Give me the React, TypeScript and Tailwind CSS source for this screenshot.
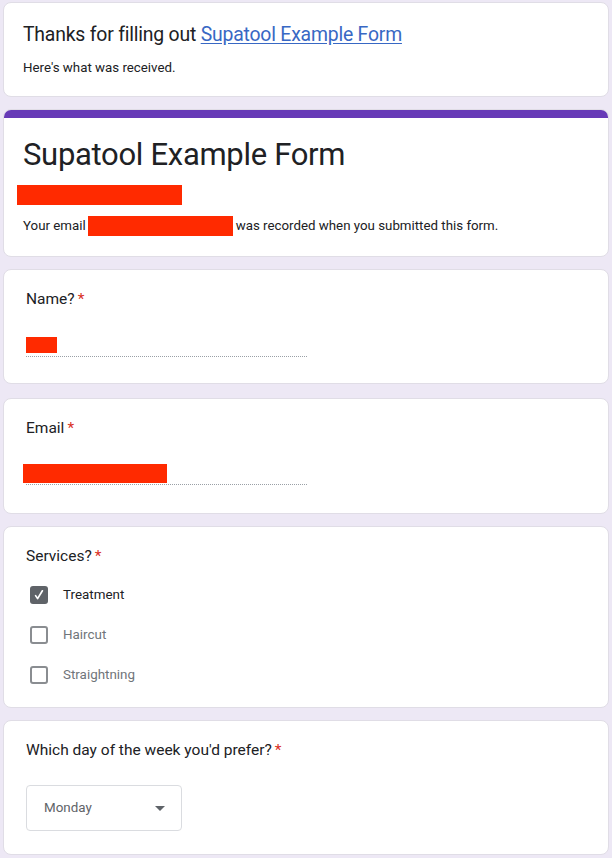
import React from "react";

const Star = () => <span className="text-[#d93025] ml-[3px]">*</span>;

function Card({ children, className = "" }: { children: React.ReactNode; className?: string }) {
  return (
    <div className={`bg-white rounded-[8px] border border-[#e0dde6] ${className}`}>{children}</div>
  );
}

function Check({ checked, label }: { checked?: boolean; label: string }) {
  return (
    <div className="h-10 flex items-center">
      <div className="w-[37px] flex pl-[4px]">
        {checked ? (
          <div className="w-[18px] h-[18px] rounded-[3px] bg-[#5f6368] flex items-center justify-center">
            <svg width="12" height="12" viewBox="0 0 12 12">
              <path d="M2.6 6.6 L4.6 9.6 L9.4 1.8" fill="none" stroke="white" strokeWidth="1.7" strokeLinecap="round" strokeLinejoin="round" />
            </svg>
          </div>
        ) : (
          <div className="w-[18px] h-[18px] rounded-[3px] border-2 border-[#8a8d91]" />
        )}
      </div>
      <span className={`text-[13.4px] ${checked ? "text-[#202124]" : "text-[#70757a]"}`}>{label}</span>
    </div>
  );
}

export default function App() {
  return (
    <div
      className="w-[612px] h-[858px] bg-[#ede8f5] px-[3px] pt-[2px] flex flex-col gap-[12px] overflow-hidden"
      style={{ fontFamily: "Roboto, 'Liberation Sans', sans-serif" }}
    >
      {/* Confirmation card */}
      <Card className="h-[95px] px-[19px] pt-[20px] shrink-0">
        <div className="text-[19.4px] leading-[24px] text-[#202124] tracking-[-0.2px]">
          Thanks for filling out{" "}
          <a className="text-[#3868c4] underline underline-offset-2">Supatool Example Form</a>
        </div>
        <div className="mt-[12px] text-[13.3px] leading-[18px] text-[#202124]">Here's what was received.</div>
      </Card>

      {/* Title card */}
      <div className="bg-white rounded-[8px] border border-[#e0dde6] overflow-hidden h-[148px] shrink-0">
        <div className="h-[8px] bg-[#673ab7]" />
        <div className="px-[19px] pt-[19px]">
          <div className="text-[31px] leading-[36px] text-[#202124] tracking-[-0.3px]">Supatool Example Form</div>
          <div className="mt-[12px] -ml-[6px] w-[165px] h-[20px] bg-[#ff2a00]" />
          <div className="mt-[11px] flex items-center h-[20px] text-[13.3px] text-[#202124]">
            <span>Your email</span>
            <span className="ml-[2px] w-[145px] h-[20px] bg-[#ff2a00]" />
            <span className="ml-[3px]">was recorded when you submitted this form.</span>
          </div>
        </div>
      </div>

      {/* Name */}
      <Card className="h-[115px] px-[22px] pt-[19px] shrink-0">
        <div className="text-[15.5px] leading-[20px] text-[#202124]">
          Name?<Star />
        </div>
        <div className="mt-[28px] w-[281px] border-b border-dotted border-[#9aa0a6] pb-[3px]">
          <div className="w-[31px] h-[16px] bg-[#ff2a00]" />
        </div>
      </Card>

      {/* Email */}
      <Card className="h-[116px] px-[22px] pt-[19px] shrink-0 mt-[2px]">
        <div className="text-[15.5px] leading-[20px] text-[#202124]">
          Email<Star />
        </div>
        <div className="mt-[26px] w-[281px] border-b border-dotted border-[#9aa0a6] pb-[1px]">
          <div className="-ml-[3px] w-[144px] h-[19px] bg-[#ff2a00]" />
        </div>
      </Card>

      {/* Services */}
      <Card className="h-[182px] px-[22px] pt-[19px] shrink-0">
        <div className="text-[15.5px] leading-[20px] text-[#202124]">
          Services?<Star />
        </div>
        <div className="mt-[9px]">
          <Check checked label="Treatment" />
          <Check label="Haircut" />
          <Check label="Straightning" />
        </div>
      </Card>

      {/* Day */}
      <Card className="h-[135px] px-[22px] pt-[19px] shrink-0">
        <div className="text-[15.5px] leading-[20px] text-[#202124]">
          Which day of the week you'd prefer?<Star />
        </div>
        <div className="mt-[25px] w-[156px] h-[46px] border border-[#dadce0] rounded-[4px] flex items-center pl-[17px] pr-[16px] justify-between">
          <span className="text-[13.4px] text-[#5f6368]">Monday</span>
          <svg width="10" height="5" viewBox="0 0 10 5">
            <path d="M0 0 L10 0 L5 5 Z" fill="#5f6368" />
          </svg>
        </div>
      </Card>
    </div>
  );
}
